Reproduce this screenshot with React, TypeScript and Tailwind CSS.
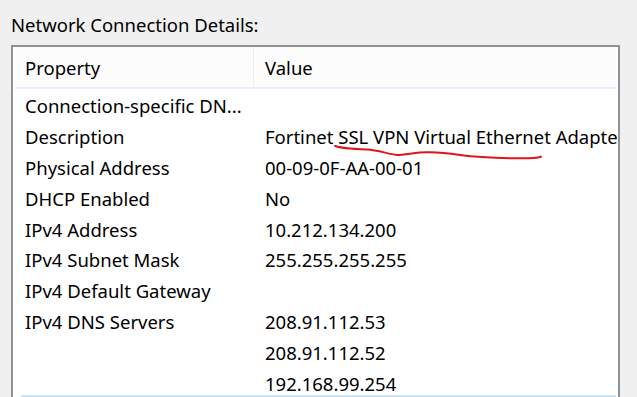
import React from "react";

const rows: [string, string][] = [
  ["Connection-specific DN...", ""],
  ["Description", "Fortinet SSL VPN Virtual Ethernet Adapter"],
  ["Physical Address", "00-09-0F-AA-00-01"],
  ["DHCP Enabled", "No"],
  ["IPv4 Address", "10.212.134.200"],
  ["IPv4 Subnet Mask", "255.255.255.255"],
  ["IPv4 Default Gateway", ""],
  ["IPv4 DNS Servers", "208.91.112.53"],
  ["", "208.91.112.52"],
  ["", "192.168.99.254"],
];

export default function App() {
  return (
    <div
      className="relative w-[637px] h-[397px] overflow-hidden bg-[#f0f0f0] text-[#000] text-[18.5px]"
      style={{ fontFamily: '"Noto Sans", "Open Sans", sans-serif' }}
    >
      <div className="pl-[11px] pt-[12px] h-[45px] leading-[26px]">Network Connection Details:</div>
      <div className="ml-[11px] w-[609px] h-[360px] border-2 border-b-0 border-[#8f9399] bg-white overflow-hidden">
        <div className="flex h-[42px] bg-[#fcfcfc] border-b-2 border-[#e6eff9] mx-[2px] leading-[26px]">
          <div className="w-[239px] border-r border-[#e8eef6] flex items-center pl-[10px] pt-[2px]">Property</div>
          <div className="flex-1 flex items-center pl-[11px] pt-[2px]">Value</div>
        </div>
        <div className="pt-[2px]">
          {rows.map(([p, v], i) => (
            <div key={i} className="flex h-[30.8px] items-center whitespace-nowrap leading-[26px]">
              <div className="w-[241px] shrink-0 pl-[12px]">{p}</div>
              <div className="pl-[11px]">{v}</div>
            </div>
          ))}
        </div>
      </div>
      <div className="absolute left-[21px] top-[395px] w-[595px] h-[2px] bg-[#cde4f7]" />
      <svg className="absolute left-0 top-0" width="637" height="397">
        <path
          d="M335 146 C340 148 355 149 367 149.5 C378 150 388 154 397 155 C405 155 418 152 428 152.3 C440 152 450 153.5 460 155 C475 157 495 158 517 158.3 C528 158.5 536 158.3 541 156.7"
          fill="none"
          stroke="#e0141a"
          strokeWidth="2"
          strokeLinecap="round"
        />
      </svg>
    </div>
  );
}
